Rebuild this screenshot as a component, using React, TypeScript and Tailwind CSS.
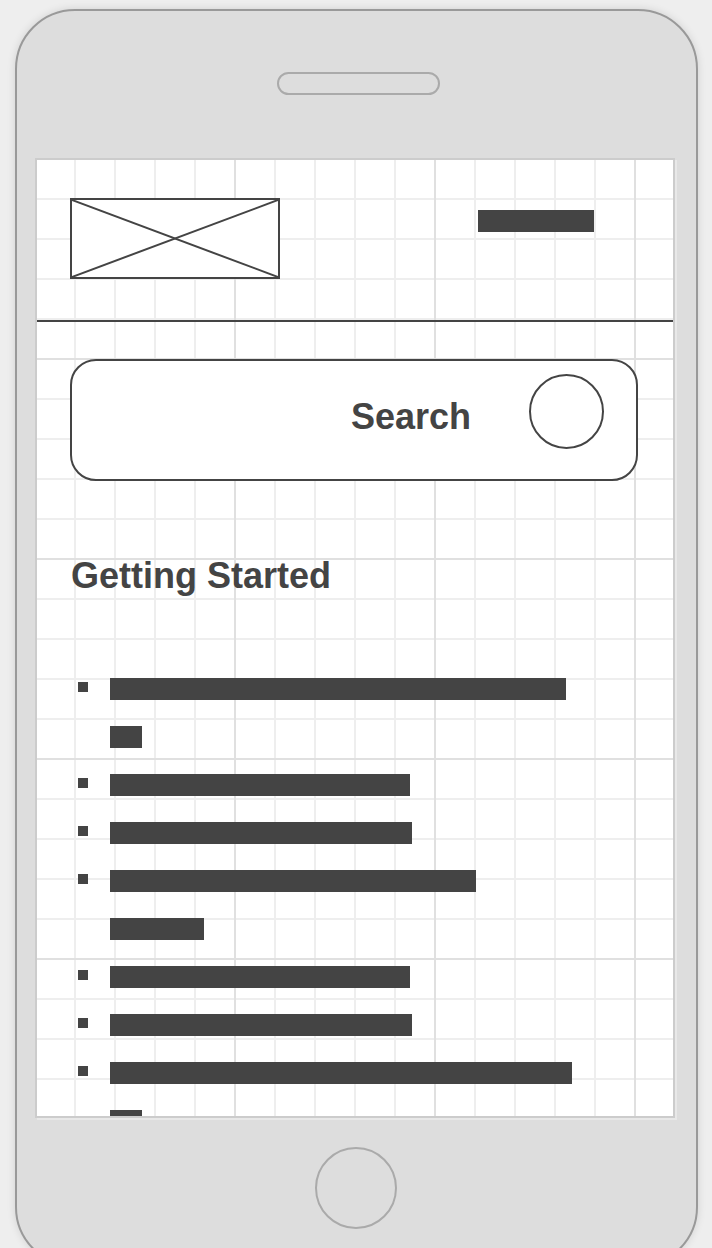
import React from 'react';

// list rows: bar width in px, bullet or continuation line
const ROWS: Array<{ w: number; bullet: boolean }> = [
  { w: 456, bullet: true },
  { w: 32, bullet: false },
  { w: 300, bullet: true },
  { w: 302, bullet: true },
  { w: 366, bullet: true },
  { w: 94, bullet: false },
  { w: 300, bullet: true },
  { w: 302, bullet: true },
  { w: 462, bullet: true },
  { w: 32, bullet: false },
];

function Row({ w, bullet }: { w: number; bullet: boolean }) {
  return (
    <div className="flex h-[48px] shrink-0 items-start">
      {bullet ? (
        <div className="ml-[41px] mt-[4px] h-[10px] w-[10px] bg-[#444]" />
      ) : (
        <div className="ml-[41px] w-[10px]" />
      )}
      <div className="ml-[22px] h-[22px] bg-[#444]" style={{ width: w }} />
    </div>
  );
}

function LogoBox() {
  return (
    <div className="relative h-[81px] w-[210px] border-2 border-[#444] bg-white">
      <svg className="absolute inset-0 h-full w-full" viewBox="0 0 206 77" preserveAspectRatio="none">
        <line x1="0" y1="0" x2="206" y2="77" stroke="#444" strokeWidth="2" />
        <line x1="0" y1="77" x2="206" y2="0" stroke="#444" strokeWidth="2" />
      </svg>
    </div>
  );
}

export default function App() {
  return (
    <div className="h-[1248px] w-[712px] overflow-hidden bg-[#eeeeee] pl-[15px] pt-[9px] font-['Liberation_Sans',Arial,sans-serif]">
      <div className="flex h-[1258px] w-[683px] flex-col items-start rounded-[60px] border-2 border-[#999] bg-[#dddddd] shadow-[0_0_8px_rgba(0,0,0,0.12)]">
        {/* speaker */}
        <div className="ml-[260px] mt-[61px] h-[23px] w-[163px] rounded-full border-2 border-[#aaa]" />

        {/* screen */}
        <div className="ml-[18px] mt-[63px] h-[960px] w-[640px] border-2 border-[#ccc] bg-white shadow-[2px_2px_0_#e8e8e8]">
          <div className="h-[956px] w-full overflow-hidden bg-[linear-gradient(to_right,#e0e0e0_2px,transparent_2px),linear-gradient(to_bottom,#e0e0e0_2px,transparent_2px),linear-gradient(to_right,#eeeeee_2px,transparent_2px),linear-gradient(to_bottom,#eeeeee_2px,transparent_2px)] bg-[length:200px_200px,200px_200px,40px_40px,40px_40px] bg-[position:197px_198px,197px_198px,37px_38px,37px_38px]">
            {/* header */}
            <div className="flex h-[162px] items-start border-b-2 border-[#444] pl-[33px] pt-[38px]">
              <LogoBox />
              <div className="ml-[198px] mt-[12px] h-[22px] w-[116px] bg-[#444]" />
            </div>

            {/* search */}
            <div className="ml-[33px] mt-[37px] flex h-[122px] w-[568px] items-start justify-end rounded-[26px] border-2 border-[#444] bg-white pr-[32px]">
              <span className="mt-[38px] text-[36px] font-bold leading-[36px] text-[#444]">Search</span>
              <div className="ml-[58px] mt-[13px] h-[75px] w-[75px] rounded-full border-2 border-[#444]" />
            </div>

            <h1 className="ml-[34px] mt-[77px] text-[36px] font-bold leading-[36px] text-[#444]">Getting Started</h1>

            <div className="mt-[84px] flex h-[476px] flex-col overflow-hidden">
              {ROWS.map((r, i) => (
                <Row key={i} w={r.w} bullet={r.bullet} />
              ))}
            </div>
          </div>
        </div>

        {/* home button */}
        <div className="ml-[298px] mt-[29px] h-[82px] w-[82px] rounded-full border-2 border-[#aaa]" />
      </div>
    </div>
  );
}
